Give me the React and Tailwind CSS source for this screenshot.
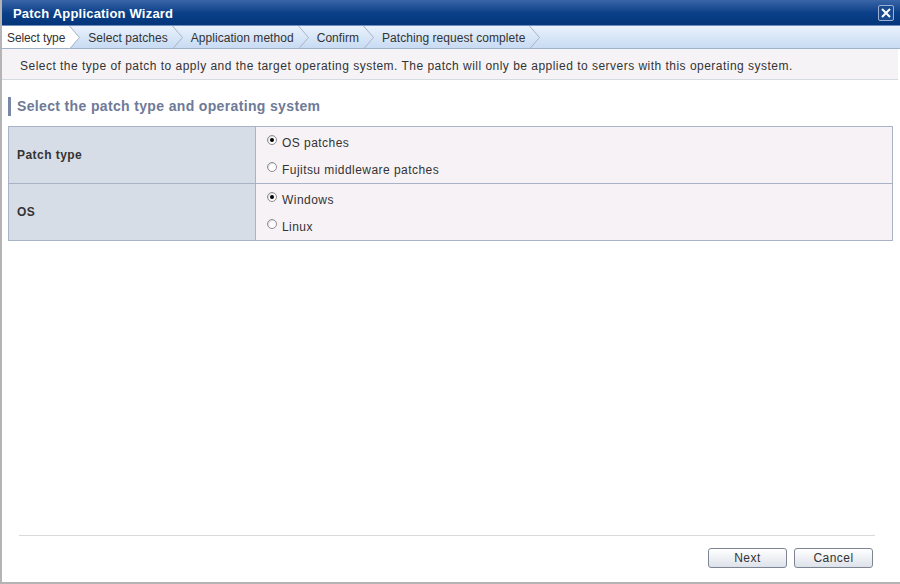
import React from "react";

const steps = ["Select type", "Select patches", "Application method", "Confirm", "Patching request complete"];

function Chevron({active}) {
    return (
        <svg width="11" height="23" viewBox="0 0 11 23" className="shrink-0">
            {active && <polygon points="0,0 10,11.5 0,23" fill="#ffffff"/>}
            <polyline points="0.5,0 10.5,11.5 0.5,23" fill="none" stroke="#a9b4c4" strokeWidth="1"/>
        </svg>
    );
}

function Radio({checked, label}) {
    return (
        <label className="flex items-center h-[28px]">
            <span className="relative w-[10px] h-[10px] rounded-full border border-[#8d8d8d] bg-white mr-[5px] -mt-[5px] shadow-[inset_1px_1px_1px_rgba(0,0,0,0.15)]">
                {checked && <span className="absolute left-[2px] top-[2px] w-[4px] h-[4px] rounded-full bg-black"/>}
            </span>
            <span className="tracking-[0.45px]">{label}</span>
        </label>
    );
}

export default function App() {
    return (
        <div className="w-[900px] h-[584px] flex flex-col bg-white border-l-2 border-b-2 border-[#b4b4b4] text-[12px] text-[#333] overflow-hidden"
             style={{fontFamily: '"Liberation Sans", Arial, sans-serif'}}>
            {/* title bar */}
            <div className="h-[26px] shrink-0 flex items-center justify-between pl-[11px] pr-[6px] bg-gradient-to-b from-[#3a65a8] via-[#0b4189] to-[#04357a] border-b border-[#6f8fc0]">
                <span className="text-white font-bold text-[13px] tracking-[0.2px] pt-[3px]">Patch Application Wizard</span>
                <span className="w-[16px] h-[16px] border border-[#9bb0d4] rounded-[2px] flex items-center justify-center bg-[#1b4b8f]">
                    <svg width="10" height="10" viewBox="0 0 10 10">
                        <path d="M1 1L9 9M9 1L1 9" stroke="#ffffff" strokeWidth="2"/>
                    </svg>
                </span>
            </div>

            {/* steps */}
            <div className="h-[23px] shrink-0 flex bg-gradient-to-b from-[#eaf2fc] to-[#c8dbf3] border-b border-[#9fb0c8]">
                {steps.map((s, i) => (
                    <div key={s} className="flex items-center">
                        <div className={`h-full flex items-center pt-[2px] ${i === 0 ? "bg-white pl-[5px] pr-[4px]" : "pl-[8px] pr-[4px]"}`}>
                            <span className={i === 0 ? "tracking-[-0.1px]" : "tracking-[0.05px]"}>{s}</span>
                        </div>
                        <Chevron active={i === 0}/>
                    </div>
                ))}
            </div>

            {/* description */}
            <div className="h-[31px] shrink-0 flex items-center pl-[18px] pt-[3px] bg-[#f6f3f7] border-b border-[#d6dbe2] mr-[2px] tracking-[0.48px]">
                Select the type of patch to apply and the target operating system. The patch will only be applied to servers with this operating system.
            </div>

            {/* body */}
            <div className="flex-1 flex flex-col px-[6px] pr-[6px]">
                <div className="mt-[17px] h-[19px] flex items-center border-l-[3px] border-[#7a87a6] pl-[6px]">
                    <span className="font-bold text-[14px] tracking-[0.35px] text-[#6e7a98]">Select the patch type and operating system</span>
                </div>

                <div className="mt-[10px] w-[885px] border border-[#a9b3c7]">
                    <div className="flex h-[57px] border-b border-[#a9b3c7]">
                        <div className="w-[247px] shrink-0 bg-[#d6dde7] border-r border-[#a9b3c7] flex items-center pl-[8px] font-bold tracking-[0.45px]">Patch type</div>
                        <div className="flex-1 bg-[#f7f2f6] pl-[11px] pt-[2px] flex flex-col">
                            <Radio checked label="OS patches"/>
                            <Radio label="Fujitsu middleware patches"/>
                        </div>
                    </div>
                    <div className="flex h-[56px]">
                        <div className="w-[247px] shrink-0 bg-[#d6dde7] border-r border-[#a9b3c7] flex items-center pl-[8px] font-bold tracking-[0.45px]">OS</div>
                        <div className="flex-1 bg-[#f7f2f6] pl-[11px] pt-[2px] flex flex-col">
                            <Radio checked label="Windows"/>
                            <Radio label="Linux"/>
                        </div>
                    </div>
                </div>

                <div className="flex-1"/>

                <div className="ml-[11px] w-[856px] border-t border-[#d9d9d9]"/>
                <div className="h-[46px] flex items-start justify-end pt-[12px] pr-[21px] gap-[7px]">
                    <button className="w-[79px] h-[20px] rounded-[3px] border border-[#7d8593] bg-gradient-to-b from-white to-[#dde2ea] text-[#333] text-[12px] tracking-[0.45px]">Next</button>
                    <button className="w-[79px] h-[20px] rounded-[3px] border border-[#7d8593] bg-gradient-to-b from-white to-[#dde2ea] text-[#333] text-[12px] tracking-[0.45px]">Cancel</button>
                </div>
            </div>
        </div>
    );
}
